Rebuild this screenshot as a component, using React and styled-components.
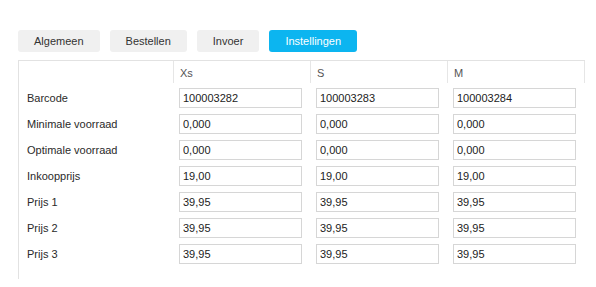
import React from "react";
import styled, { createGlobalStyle } from "styled-components";

const GlobalStyle = createGlobalStyle`
  body {
    margin: 0;
    background: #fff;
    font-family: "Liberation Sans", Arial, sans-serif;
  }
`;

const Page = styled.div`
  padding: 30px 0 0 18px;
`;

const Tabs = styled.div`
  display: flex;
  gap: 10px;
`;

const Tab = styled.button`
  height: 22px;
  padding: 0 16px;
  border: none;
  border-radius: 3px;
  font-family: inherit;
  font-size: 11px;
  background: ${(p) => (p.active ? "#0cb5f0" : "#f0f0f0")};
  color: ${(p) => (p.active ? "#fff" : "#333")};
  cursor: pointer;
`;

const Panel = styled.div`
  margin-top: 8px;
  width: 566px;
  height: 218px;
  border-top: 1px solid #e2e2e2;
  border-left: 1px solid #e2e2e2;
  display: grid;
  grid-template-columns: 154px 137px 137px 138px;
  grid-template-rows: 22px;
  grid-auto-rows: 26px;
  align-content: start;
`;

const HeadCell = styled.div`
  font-size: 11px;
  color: #555;
  padding: 6px 0 0 6px;
  border-left: ${(p) => (p.first ? "none" : "1px solid #e6e6e6")};
  border-right: ${(p) => (p.last ? "1px solid #e6e6e6" : "none")};
`;

const Label = styled.div`
  font-size: 11px;
  color: #2a2a2a;
  padding: 5px 0 0 8px;
  display: flex;
  align-items: center;
  height: 20px;
`;

const Cell = styled.div`
  padding: 5px 0 0 6px;
`;

const Field = styled.input`
  display: block;
  box-sizing: border-box;
  width: 123px;
  height: 20px;
  border: 1px solid #d6d6d6;
  padding: 0 3px;
  font-family: inherit;
  font-size: 11px;
  color: #222;
  outline: none;
`;

const sizes = ["Xs", "S", "M"];

const rows = [
  ["Barcode", ["100003282", "100003283", "100003284"]],
  ["Minimale voorraad", ["0,000", "0,000", "0,000"]],
  ["Optimale voorraad", ["0,000", "0,000", "0,000"]],
  ["Inkoopprijs", ["19,00", "19,00", "19,00"]],
  ["Prijs 1", ["39,95", "39,95", "39,95"]],
  ["Prijs 2", ["39,95", "39,95", "39,95"]],
  ["Prijs 3", ["39,95", "39,95", "39,95"]],
];

const App = () => {
  return (
    <Page>
      <GlobalStyle />
      <Tabs>
        <Tab>Algemeen</Tab>
        <Tab>Bestellen</Tab>
        <Tab>Invoer</Tab>
        <Tab active>Instellingen</Tab>
      </Tabs>
      <Panel>
        <HeadCell first />
        {sizes.map((s, i) => (
          <HeadCell key={s} last={i === sizes.length - 1}>
            {s}
          </HeadCell>
        ))}
        {rows.map(([label, values]) => (
          <React.Fragment key={label}>
            <Label>{label}</Label>
            {values.map((v, i) => (
              <Cell key={i}>
                <Field defaultValue={v} />
              </Cell>
            ))}
          </React.Fragment>
        ))}
      </Panel>
    </Page>
  );
};

export default App;
